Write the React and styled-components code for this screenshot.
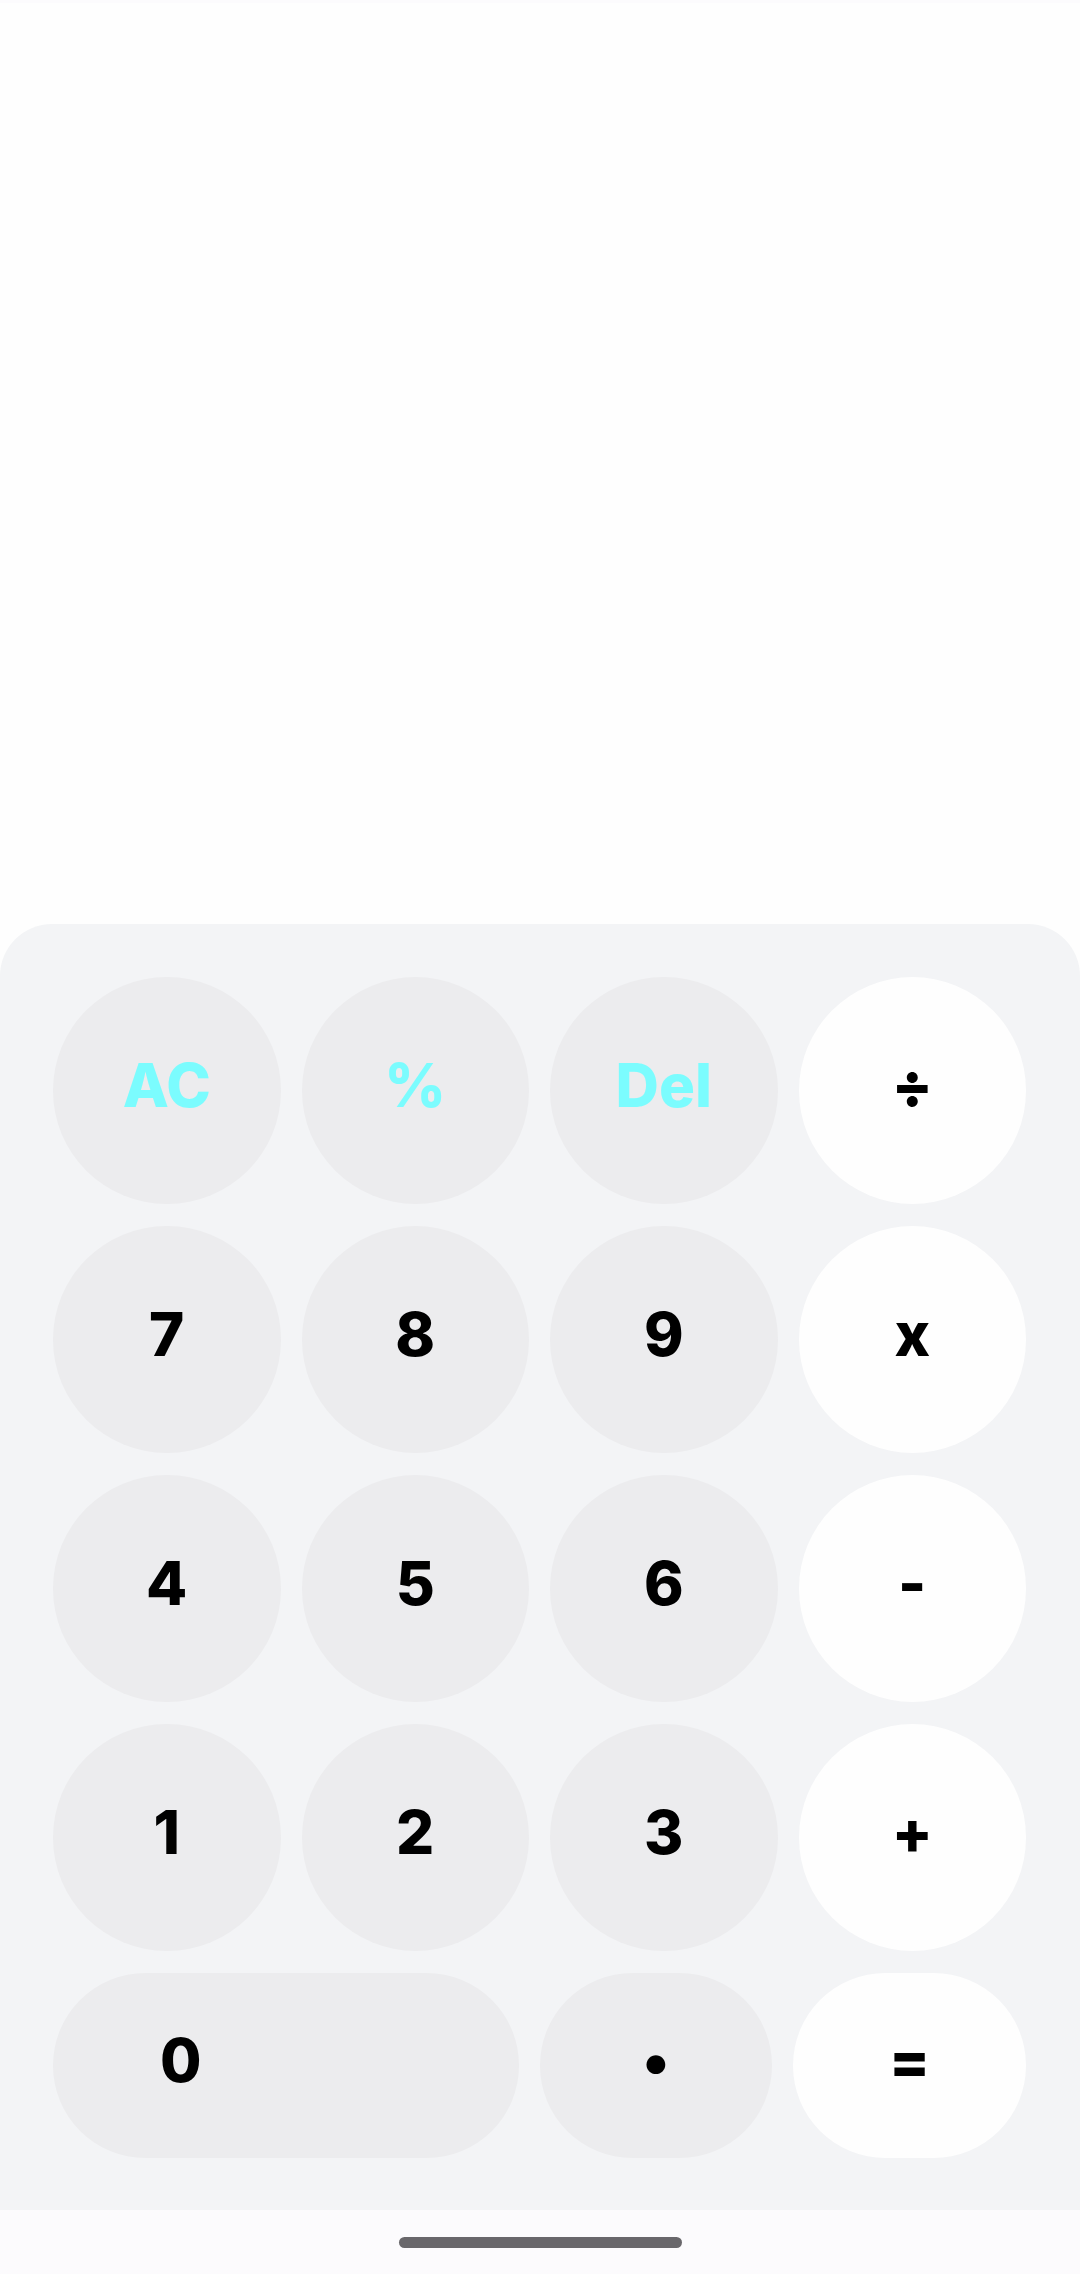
import styled, { createGlobalStyle } from "styled-components";

const GlobalStyle = createGlobalStyle`
  html, body {
    margin: 0;
    padding: 0;
    background: #fefefe;
  }
  * {
    box-sizing: border-box;
  }
`;

const Screen = styled.div`
  width: 1080px;
  height: 2274px;
  display: flex;
  flex-direction: column;
  background: #fefefe;
  font-family: Inter, "Noto Sans", sans-serif;
`;

const StatusStrip = styled.div`
  height: 3px;
  background: #fcfbfd;
`;

const Display = styled.div`
  flex: 1;
  background: #fefefe;
`;

const Keypad = styled.div`
  background: #f3f4f6;
  border-radius: 52px 52px 0 0;
  padding: 53px 54px 52px 53px;
  display: flex;
  flex-direction: column;
  gap: 22px;
`;

const KeyRow = styled.div`
  display: flex;
  gap: 21px;
  height: ${(p) => p.height || 227}px;
`;

const Key = styled.button`
  flex: ${(p) => p.grow || 1} 1 0;
  min-width: 0;
  height: 100%;
  border: none;
  border-radius: 999px;
  padding: 0 0 12px 0;
  display: flex;
  align-items: center;
  justify-content: ${(p) => (p.left ? "flex-start" : "center")};
  background: ${(p) => (p.operator ? "#fefefe" : "#ececee")};
  color: ${(p) => (p.accent ? "#7bfcfe" : "#000000")};
  font-family: Inter, "Noto Sans", sans-serif;
  font-weight: 800;
  font-size: 60px;
  line-height: 1;
  cursor: pointer;
`;

const Label = styled.span`
  margin-left: ${(p) => p.offset || 0}px;
`;

const NavBar = styled.div`
  height: 64px;
  background: #fcfbfd;
  display: flex;
  align-items: center;
  justify-content: center;
`;

const HomeIndicator = styled.div`
  width: 283px;
  height: 11px;
  border-radius: 6px;
  background: #69676b;
`;

const rows = [
  [
    { label: "AC", accent: true },
    { label: "%", accent: true },
    { label: "Del", accent: true },
    { label: "÷", operator: true },
  ],
  [{ label: "7" }, { label: "8" }, { label: "9" }, { label: "x", operator: true }],
  [{ label: "4" }, { label: "5" }, { label: "6" }, { label: "-", operator: true }],
  [{ label: "1" }, { label: "2" }, { label: "3" }, { label: "+", operator: true }],
];

export default function App() {
  return (
    <>
      <GlobalStyle />
      <Screen>
        <StatusStrip />
        <Display />
        <Keypad>
          {rows.map((row, i) => (
            <KeyRow key={i}>
              {row.map((k) => (
                <Key key={k.label} accent={k.accent} operator={k.operator}>
                  {k.label}
                </Key>
              ))}
            </KeyRow>
          ))}
          <KeyRow height={185}>
            <Key grow={2} left>
              <Label offset={107}>0</Label>
            </Key>
            <Key>•</Key>
            <Key operator>=</Key>
          </KeyRow>
        </Keypad>
        <NavBar>
          <HomeIndicator />
        </NavBar>
      </Screen>
    </>
  );
}
